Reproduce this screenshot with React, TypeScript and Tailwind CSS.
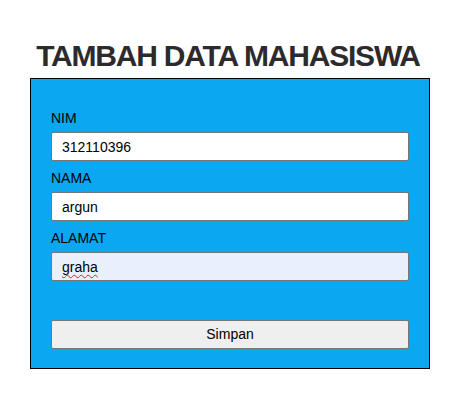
import React, { useState } from "react";

type FieldProps = {
  label: string;
  value: string;
  autofill?: boolean;
  onChange: (v: string) => void;
};

const Field = ({ label, value, autofill, onChange }: FieldProps) => (
  <div className="mb-[8px]">
    <label className="block mb-[5px] text-[14px] leading-[18px] text-black">{label}</label>
    <div className="relative">
      <input
        type="text"
        value={value}
        onChange={(e) => onChange(e.target.value)}
        className={
          autofill
            ? "block w-full h-[29px] px-[10px] text-[14px] text-black bg-[#e8f0fe] border border-[#767676] rounded-[2px] outline-none"
            : "block w-full h-[29px] px-[10px] text-[14px] text-black bg-white border border-[#767676] rounded-[2px] outline-none"
        }
      />
      {/* spellcheck squiggle under the autofilled word */}
      {autofill && (
        <span className="pointer-events-none absolute left-[11px] top-0 h-[29px] leading-[29px] text-[14px] text-transparent underline decoration-wavy decoration-[#e02020] decoration-1 underline-offset-[3px]">
          {value}
        </span>
      )}
    </div>
  </div>
);

export default function App() {
  const [nim, setNim] = useState("312110396");
  const [nama, setNama] = useState("argun");
  const [alamat, setAlamat] = useState("graha");

  return (
    <div className="w-[456px] h-[405px] bg-white font-['Liberation_Sans',Arial,sans-serif]">
      <h1 className="pt-[40px] h-[78px] text-center text-[30px] leading-[32px] font-bold tracking-[-1.2px] text-[#2d2a2e]">
        TAMBAH DATA MAHASISWA
      </h1>
      <form
        className="mx-[30px] w-[400px] border border-black bg-[#0ba7f0] px-[20px] pt-[30px] pb-[19px]"
        onSubmit={(e) => e.preventDefault()}
      >
        <Field label="NIM" value={nim} onChange={setNim} />
        <Field label="NAMA" value={nama} onChange={setNama} />
        <Field label="ALAMAT" value={alamat} autofill onChange={setAlamat} />
        <button
          type="submit"
          className="block w-full h-[29px] mt-[39px] text-[14px] text-black bg-[#efefef] border border-[#767676] rounded-[2px]"
        >
          Simpan
        </button>
      </form>
    </div>
  );
}
